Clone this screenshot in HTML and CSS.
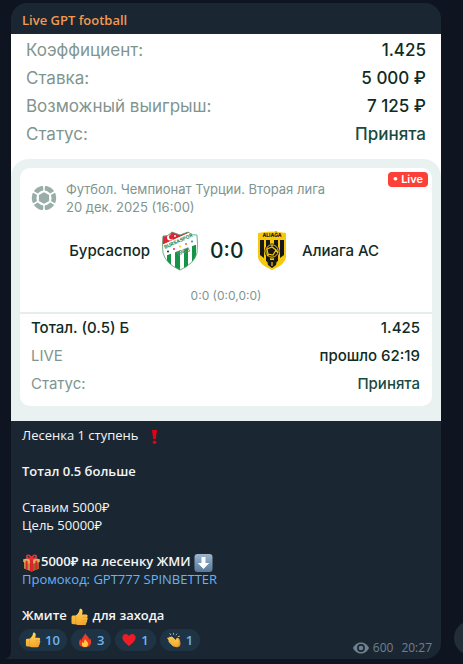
FILE: index.html
```html
<!DOCTYPE html>
<html lang="ru">
<head>
  <meta charset="UTF-8" />
  <meta name="viewport" content="width=device-width, initial-scale=1.0" />
  <title>Live GPT football</title>
  <link rel="stylesheet" href="styles.css">
</head>
<body>
  <svg class="sprite" aria-hidden="true">
    <defs>
      <linearGradient id="skin" x1="0" y1="0" x2="0" y2="1">
        <stop offset="0" stop-color="#ffd65a" />
        <stop offset="1" stop-color="#f5a52b" />
      </linearGradient>
      <linearGradient id="key" x1="0" y1="0" x2="0" y2="1">
        <stop offset="0" stop-color="#9db6cb" />
        <stop offset="1" stop-color="#56799b" />
      </linearGradient>
    </defs>
    <symbol id="thumb" viewBox="0 0 18 18">
      <path fill="url(#skin)" d="M1 9.2c0-1 .7-1.6 1.7-1.6h2.2C6.800 6.600 8.400 4.600 8.900 2.200 9.100.9 9.700.5 10.400.7c1.900.5 2.100 3.100 1.100 5.700h3.900c1.900 0 2.300 2 1.100 2.800 1.200.8.900 2.500-.2 2.900.8.900.4 2.300-.7 2.600.5 1.200-.3 2.400-1.800 2.400H8.500c-1.700 0-2.700-.7-3.800-.9H2.600c-1 0-1.600-.7-1.600-1.600z" />
      <path fill="none" stroke="#d98f25" stroke-width=".5" d="M12 9.400h4.200M12 12.200h4M12 14.800h3.300M5.200 8v8" />
    </symbol>
    <symbol id="gift" viewBox="0 0 18 18">
      <path fill="#c48a42" d="M1.500 7.500 9 9l7.500-1.500v7L9 17.500l-7.500-3z" />
      <path fill="#9c622b" d="M9 9l7.500-1.500v7L9 17.500z" />
      <path fill="#e3ad62" d="M.7 5.200 9 3.500l8.300 1.700v2.900L9 10 .7 8.100z" />
      <path fill="#d9252c" d="M7.400 5h3.200v12l-1.600.6-1.600-.6zM3.200 6.500l1.900.4v9l-1.900-.8zM12.900 6.900l1.900-.4v8.600l-1.900.8z" />
      <path fill="none" stroke="#e9333a" stroke-width="1.700" d="M9 5C6 5 3.600 3.500 4.300 2 5.200.3 8.200 1.600 9 5zM9 5c3 0 5.400-1.500 4.700-3C12.800.3 9.800 1.600 9 5z" />
    </symbol>
    <symbol id="down" viewBox="0 0 18 18">
      <rect width="18" height="18" rx="3" fill="url(#key)" />
      <path fill="#fff" d="M7 3h4v6h3.700L9 15 3.300 9H7z" />
    </symbol>
    <symbol id="fire" viewBox="0 0 18 18">
      <path fill="#ee3d20" d="M9.200.8c.5 2.900 4.500 4 4.400 8 .7-.5.9-1.300.9-2.100 3 4.300 1.500 10.500-5.400 10.500S.8 12.300 3.800 7.500c.2 1.300.8 1.900 1.500 2.200C4.900 6 8.700 4.700 9.200.8z" />
      <path fill="#ffcf3e" d="M9 7.500c.3 2 3.700 3.200 3.400 6.200-.2 2.200-1.600 3.200-3.400 3.200s-3.500-1-3.500-3c0-1.200.6-2 1.100-2.600.2.8.6 1.200 1.100 1.400C7.500 10.500 8.900 9.600 9 7.500z" />
    </symbol>
    <symbol id="heart" viewBox="0 0 18 18">
      <path fill="#ee1c25" d="M9 16C6 13.300 1.500 10 1.500 6.300c0-4.700 5.700-5.400 7.500-1.700 1.800-3.700 7.500-3 7.500 1.700C16.500 10 12 13.300 9 16z" />
    </symbol>
    <symbol id="clap" viewBox="0 0 18 18">
      <path fill="#e8952e" d="M6 6c1-.8 6 4 6.500 3.500s-.5-3 .8-3c1.700 0 3 4 3 6.500 0 3-2 4.300-4.300 4.300z" />
      <path fill="url(#skin)" d="M1.700 6.500c.7-.8 1.400-.3 1.900.2-.4-1.300.8-1.900 1.700-1 .3-1 1.300-1 2-.2l3.900 4c.2-1.300.1-2.900 1.300-2.800 1.600.3 2.200 4 1.900 6.300-.4 3.200-3.300 4.600-5.900 3.400-1.700-.8-3.800-3.200-5.500-5.400-.7-.9-.2-1.500.4-1.400L1.700 7.700c-.3-.4-.3-.8 0-1.200z" />
      <path fill="none" stroke="#d98f25" stroke-width=".5" d="m3.600 6.700 3.800 4M5.300 5.700l4 4.200M3.400 9.600l3 3.200" />
      <path fill="none" stroke="#b9c0c5" stroke-width="1" d="M5.500 3.400 4.300 1.500M8.400 3V1M11 3.600l1.600-1.700M13.200 5.300l2.400-.6" />
    </symbol>
    <symbol id="alert" viewBox="0 0 18 18">
      <path fill="#e60012" d="M6.500 2h5l-1.200 9H7.700z" />
      <circle cx="9" cy="14.200" r="1.800" fill="#e60012" />
    </symbol>
  </svg>

  <main class="chat">
    <article class="message">
      <svg class="tail" viewBox="0 0 10 16" aria-hidden="true"><path d="M6 0h4v16H0c4-1 6-4 6-8z" /></svg>
      <h1 class="sender">Live GPT football</h1>

      <section class="slip">
        <dl class="rows summary">
          <div class="row"><dt>Коэффициент:</dt><dd>1.425</dd></div>
          <div class="row"><dt>Ставка:</dt><dd>5 000 ₽</dd></div>
          <div class="row"><dt>Возможный выигрыш:</dt><dd>7 125 ₽</dd></div>
          <div class="row"><dt>Статус:</dt><dd class="ok">Принята</dd></div>
        </dl>

        <div class="ticket">
          <div class="card">
            <span class="live">• Live</span>
            <div class="event">
              <svg class="ball" viewBox="0 0 26 26" aria-hidden="true">
                <circle cx="13" cy="13" r="9.900" fill="none" stroke="#99aea8" stroke-width="4.600" />
                <path stroke="#fff" stroke-width="1.500" d="M13 0v26M1.700 6.500l22.600 13M24.300 6.500l-22.600 13" />
                <path fill="#99aea8" stroke="#fff" stroke-width="1.400" d="M13 6.300l5.800 3.300v6.800L13 19.700l-5.800-3.300V9.600z" />
                <path fill="#fff" d="M11 0h4l-2 3zM11 26h4l-2-3zM.6 8l2-3.500.8 3zM25.400 8l-2-3.500-.8 3zM.6 18l2 3.500.8-3zM25.400 18l-2 3.500-.8-3z" />
              </svg>
              <p>Футбол. Чемпионат Турции. Вторая лига<br>20 дек. 2025 (16:00)</p>
            </div>

            <div class="match">
              <span class="team home">Бурсаспор</span>
              <svg class="crest" viewBox="0 0 36 40" role="img" aria-label="Бурсаспор">
                <defs>
                  <clipPath id="bursa"><path d="M1 5q5 1 9-4l8 3 8-3q4 4 9 3 1 10 0 18-3 11-17 17Q4 33 1 22 0 14 1 5z" /></clipPath>
                </defs>
                <g clip-path="url(#bursa)">
                  <path fill="#fff" d="M0 0h36v40H0z" />
                  <path fill="#159447" d="M5 20h4v20H5zM13 18h5v22h-5zM22 15h4v25h-4zM30 12h4v28h-4z" />
                  <path fill="#dc2636" d="M0 0h31L0 14z" />
                  <path fill="#fff" d="M0 14 31 0h5v13L0 26z" />
                  <circle cx="8" cy="6.500" r="3" fill="#fff" />
                  <circle cx="9.200" cy="6.100" r="2.300" fill="#dc2636" />
                  <circle cx="13" cy="5" r="1" fill="#fff" />
                  <circle cx="6" cy="20.500" r="1" fill="#223" />
                  <circle cx="12" cy="18" r="1" fill="#d33" />
                  <circle cx="18" cy="15.500" r="1" fill="#eac51c" />
                  <circle cx="24" cy="13" r="1" fill="#e63" />
                  <circle cx="30" cy="10.500" r="1" fill="#248ac8" />
                </g>
                <text class="bursa-name" transform="rotate(-24 3 18)" x="3" y="18">BURSASPOR</text>
                <text class="bursa-year" transform="rotate(-20 15 25)" x="15" y="25">1963</text>
                <path fill="none" stroke="#4d9b6c" stroke-width=".8" d="M1 5q5 1 9-4l8 3 8-3q4 4 9 3 1 10 0 18-3 11-17 17Q4 33 1 22 0 14 1 5z" />
              </svg>
              <strong class="score">0:0</strong>
              <svg class="crest" viewBox="0 0 36 40" role="img" aria-label="Алиага АС">
                <path fill="#f6c90e" d="M4 2q14-3 28 0v24q0 7-14 13Q4 33 4 26z" />
                <path fill="#181818" d="M6 9h4v18l-4-3zM12 9h4v24l-4-3zM20 9h4v21l-4 3zM26 9h4v15l-4 3zM13 29h10l-1 5-4 3-4-3z" />
                <circle cx="18" cy="20" r="7.500" fill="#181818" />
                <circle cx="18" cy="20" r="6.200" fill="none" stroke="#f6c90e" />
                <path fill="none" stroke="#f6c90e" stroke-width="1.200" d="m13 18 5-2 4 3-3 5-5-1zM18 16v-2M22 19l2 3M15 23l-2 2M18 31v4" />
                <text class="aliaga-name" x="18" y="6">ALIAĞA</text>
              </svg>
              <span class="team">Алиага АС</span>
            </div>
            <p class="periods">0:0 (0:0,0:0)</p>

            <dl class="rows bet">
              <div class="row title"><dt>Тотал. (0.5) Б</dt><dd>1.425</dd></div>
              <div class="row"><dt>LIVE</dt><dd>прошло 62:19</dd></div>
              <div class="row"><dt>Статус:</dt><dd class="ok">Принята</dd></div>
            </dl>
          </div>
        </div>
      </section>

      <div class="caption">
        <p>Лесенка 1 ступень &nbsp;<svg class="emoji" role="img" aria-label="Внимание"><use href="#alert" /></svg></p>
        <p><b>Тотал 0.5 больше</b></p>
        <p>Ставим 5000₽<br>Цель 50000₽</p>
        <p><b><svg class="emoji" role="img" aria-label="Подарок"><use href="#gift" /></svg>5000₽ на лесенку ЖМИ <svg class="emoji" role="img" aria-label="Вниз"><use href="#down" /></svg></b><br><a href="#">Промокод: GPT777 SPINBETTER</a></p>
        <p><b>Жмите <svg class="emoji" role="img" aria-label="Лайк"><use href="#thumb" /></svg> для захода</b></p>
      </div>

      <footer class="footer">
        <div class="reactions">
          <button type="button" aria-label="Лайк, 10"><svg><use href="#thumb" /></svg>10</button>
          <button type="button" aria-label="Огонь, 3"><svg><use href="#fire" /></svg>3</button>
          <button type="button" aria-label="Сердце, 1"><svg><use href="#heart" /></svg>1</button>
          <button type="button" aria-label="Аплодисменты, 1"><svg><use href="#clap" /></svg>1</button>
        </div>
        <div class="meta">
          <svg viewBox="0 0 16 12" aria-hidden="true">
            <path fill="#70808f" d="M0 6c2-4 5-5.500 8-5.500S14 2 16 6c-2 4-5 5.500-8 5.500S2 10 0 6z" />
            <circle cx="8" cy="6" r="3.100" fill="none" stroke="#1a2733" stroke-width="1.600" />
          </svg>
          <span>600</span>
          <time>20:27</time>
        </div>
      </footer>
    </article>

    <button type="button" class="share" aria-label="Поделиться">
      <svg viewBox="0 0 18 16" aria-hidden="true"><path fill="#fff" d="M11 1l6 6-6 6V9.500C6 9.500 3 11 1 14c.5-5 4-9 10-9.500z" /></svg>
    </button>
  </main>
</body>
</html>
```

FILE: styles.css
```css
* {
  box-sizing: border-box;
}
body {
  margin: 0;
  background: #0e1520;
  color: #f5f5f5;
  font-family: "Open Sans", "Noto Sans", sans-serif;
  font-size: 13px;
  line-height: 18px;
  overflow-x: hidden;
}
p, dl, dd, h1 {
  margin: 0;
}
b {
  font-weight: 600;
}
.sprite {
  position: absolute;
  width: 0;
  height: 0;
}
.chat {
  display: flex;
  align-items: flex-end;
  gap: 13px;
  padding: 3px 0 5px 11px;
  overflow: hidden;
}
.message {
  position: relative;
  flex: 1;
  min-width: 0;
  max-width: 430px;
  background: #1a2733;
  border-radius: 16px 16px 16px 0;
}
.tail {
  position: absolute;
  left: -6px;
  bottom: 0;
  width: 10px;
  height: 16px;
  fill: #1a2733;
}
.sender {
  padding: 8px 11px 5px;
  color: #f29a4f;
  font-size: 13px;
  font-weight: 600;
  line-height: 18px;
}

/* bet slip */
.slip {
  background: #fff;
  color: #0f2b25;
  font-family: Inter, "Liberation Sans", sans-serif;
}
.row {
  display: flex;
  justify-content: space-between;
  line-height: 28px;
}
.row dt {
  color: #7f958f;
}
.row dd {
  font-weight: 500;
}
.row .ok {
  color: #184a3f;
}
.summary {
  padding: 2px 15px 11px;
  font-size: 17px;
}
.ticket {
  padding: 9px 9px 15px;
  background: #eaf2f1;
  border-radius: 18px 18px 0 0;
}
.card {
  position: relative;
  background: #fff;
  border-radius: 10px;
}
.live {
  position: absolute;
  top: 4px;
  right: 4px;
  padding: 0 5px;
  border-radius: 4px;
  background: #fd3f38;
  color: #fff;
  font-size: 11px;
  font-weight: 600;
  line-height: 15px;
}
.event {
  display: flex;
  align-items: center;
  gap: 9px;
  padding: 12px 11px 0;
  color: #7f958f;
}
.ball {
  width: 26px;
  height: 26px;
}
.match {
  display: grid;
  grid-template-columns: 1fr 36px 32px 36px 1fr;
  align-items: center;
  column-gap: 12px;
  padding-top: 15px;
  font-size: 15px;
}
.team {
  font-weight: 500;
}
.home {
  text-align: right;
}
.crest {
  width: 36px;
  height: 40px;
}
.bursa-name {
  fill: #23874f;
  font-size: 5px;
  font-weight: 700;
}
.bursa-year {
  fill: #5b8f78;
  font-size: 6px;
  font-weight: 700;
}
.aliaga-name {
  fill: #181818;
  font-size: 5px;
  font-weight: 800;
  text-anchor: middle;
}
.score {
  font-size: 21px;
  font-weight: 500;
  text-align: center;
  white-space: nowrap;
}
.periods {
  padding: 16px 0 7px;
  color: #7f958f;
  font-size: 12px;
  text-align: center;
}
.bet {
  padding: 0 12px 8px 11px;
  border-top: 2px solid #e6eeec;
  font-size: 15px;
}
.bet .title dt {
  color: #0f2b25;
  font-weight: 500;
}

/* message text */
.caption {
  padding: 5px 11px 0;
}
.caption p + p {
  margin-top: 18px;
}
.caption a {
  color: #6ab2f2;
  text-decoration: none;
}
.emoji {
  width: 19px;
  height: 18px;
  margin: -2px 0;
  vertical-align: middle;
}
.footer {
  display: flex;
  justify-content: space-between;
  padding: 5px 9px 8px 8px;
}
.reactions {
  display: flex;
  gap: 4px;
}
.reactions button {
  display: flex;
  align-items: center;
  gap: 4px;
  height: 22px;
  padding: 0 7px 0 6px;
  border: none;
  border-radius: 11px;
  background: #1e3445;
  color: #6fb5ee;
  font: 600 13px/22px "Open Sans", sans-serif;
  cursor: pointer;
}
.reactions svg {
  width: 16px;
  height: 16px;
}
.meta {
  display: flex;
  align-self: flex-end;
  align-items: center;
  gap: 4px;
  margin-bottom: -6px;
  color: #70808f;
  font-size: 12px;
}
.meta svg {
  width: 16px;
  height: 12px;
}
.meta time {
  margin-left: 4px;
}
/* share button hangs over the right edge on narrow windows */
.share {
  flex: none;
  width: 34px;
  height: 34px;
  margin: 0 -25px 4px 0;
  padding: 8px;
  border: none;
  border-radius: 50%;
  background: #222d38;
  cursor: pointer;
}
.share svg {
  display: block;
  width: 18px;
  height: 18px;
}
```
